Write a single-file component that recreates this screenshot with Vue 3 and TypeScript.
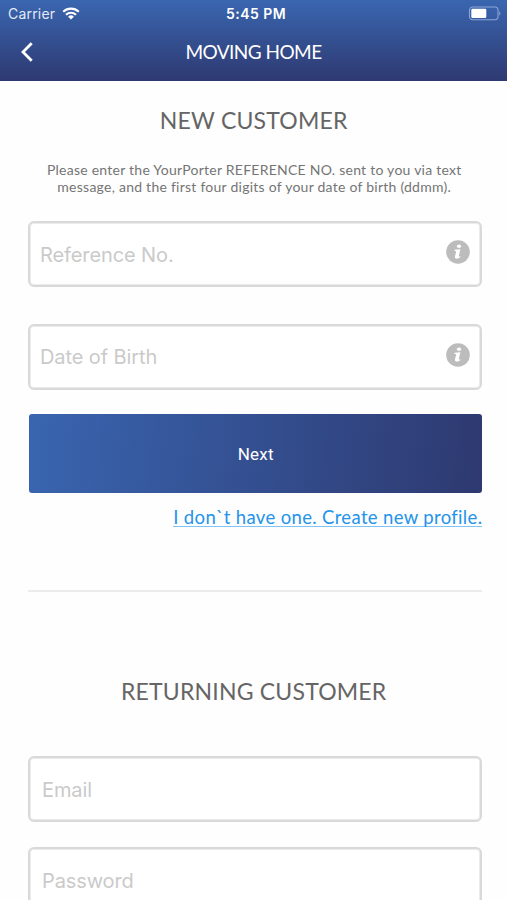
<script setup lang="ts">
import { reactive } from 'vue'

interface Field {
  key: 'reference' | 'birth' | 'email' | 'password'
  label: string
  type: string
}

const customerFields: Field[] = [
  { key: 'reference', label: 'Reference No.', type: 'text' },
  { key: 'birth', label: 'Date of Birth', type: 'text' },
]
const loginFields: Field[] = [
  { key: 'email', label: 'Email', type: 'email' },
  { key: 'password', label: 'Password', type: 'password' },
]
const form = reactive({ reference: '', birth: '', email: '', password: '' })
</script>

<template>
  <div class="screen">
    <header class="header">
      <div class="status">
        <div class="carrier">
          <span class="carrier-name">Carrier</span>
          <svg class="wifi" viewBox="0 0 18 13" width="18" height="13">
            <path d="M1.2 4.8a11.2 11.2 0 0 1 15.6 0M4 7.7a7.2 7.2 0 0 1 10 0" fill="none" stroke="#fff" stroke-width="2.1" />
            <path d="M9 12.6 6.1 9.7a4.1 4.1 0 0 1 5.8 0z" fill="#fff" />
          </svg>
        </div>
        <span class="time">5:45 PM</span>
        <svg class="battery" viewBox="0 0 33 15" width="33" height="15">
          <rect x="1.5" y="1" width="28.5" height="12.7" rx="3.2" fill="none" stroke="#8ba6d6" stroke-width="1.1" />
          <rect x="3.3" y="2.8" width="15" height="9.1" rx="1.2" fill="#fff" />
          <path d="M31.3 5.2c1.5.6 1.5 3.7 0 4.3z" fill="#8ba6d6" />
        </svg>
      </div>
      <nav class="nav">
        <button class="back" aria-label="Back">
          <svg viewBox="0 0 14 22" width="14" height="22">
            <path d="M11.7 2.2 3 11l8.7 8.8" fill="none" stroke="#fff" stroke-width="2.8" />
          </svg>
        </button>
        <h1 class="title">MOVING HOME</h1>
      </nav>
    </header>

    <main class="content">
      <h2 class="heading new">NEW CUSTOMER</h2>
      <p class="intro">
        <span class="line first">Please enter the YourPorter REFERENCE NO. sent to you via text</span>
        <span class="line second">message, and the first four digits of your date of birth (ddmm).</span>
      </p>
      <div class="fields customer">
        <label v-for="f in customerFields" :key="f.key" class="field">
          <input v-model="form[f.key]" :type="f.type" :placeholder="f.label" />
          <svg class="info" viewBox="0 0 24 24" width="24" height="24">
            <circle cx="12" cy="12" r="11.8" fill="#bcbcbc" />
            <ellipse cx="13" cy="6.2" rx="2.1" ry="1.8" fill="#fff" />
            <path d="M8.6 9.7 14.4 9.2 12.8 16c-.1.7.4.8 1.7.2l-.2 1c-1.4 1.1-2.8 1.6-4 1.4-1.2-.2-1.6-1.1-1.3-2.3l1.1-4.5c.1-.6-.4-.8-1.7-.9z" fill="#fff" />
          </svg>
        </label>
      </div>
      <button class="next"><span>Next</span></button>
      <a class="create">I don`t have one. Create new profile.</a>
      <hr class="divider" />
      <h2 class="heading returning">RETURNING CUSTOMER</h2>
      <div class="fields login">
        <label v-for="f in loginFields" :key="f.key" class="field">
          <input v-model="form[f.key]" :type="f.type" :placeholder="f.label" />
        </label>
      </div>
    </main>
  </div>
</template>

<style>
body {
  margin: 0;
  overflow: hidden;
}
</style>

<style scoped>
.screen {
  box-sizing: border-box;
  width: 100%;
  height: 900px;
  overflow: hidden;
  background: #fefefe;
  font-family: Lato, "Liberation Sans", sans-serif;
}
button {
  border: 0;
  padding: 0;
  background: none;
  font: inherit;
}
.header {
  box-sizing: border-box;
  height: 81px;
  background: linear-gradient(#3a66b0, #2e3971);
  color: #fff;
}
.status {
  display: grid;
  grid-template-columns: 1fr auto 1fr;
  align-items: center;
  height: 27px;
  padding: 0 6px 0 8px;
  font-family: Inter, sans-serif;
  font-size: 14px;
}
.carrier {
  display: flex;
  align-items: center;
  gap: 7px;
}
.carrier-name {
  letter-spacing: 0.2px;
  color: #e3eaf6;
}
.time {
  font-weight: 600;
  font-size: 14px;
  letter-spacing: 0.45px;
  padding-left: 3px;
}
.battery {
  justify-self: end;
}
.nav {
  display: grid;
  grid-template-columns: 60px 1fr 60px;
  align-items: center;
  height: 49px;
}
.back {
  display: flex;
  padding-left: 20px;
}
.title {
  margin: 0;
  text-align: center;
  font-size: 19px;
  font-weight: 400;
  letter-spacing: -0.55px;
  white-space: nowrap;
}
.content {
  display: flex;
  flex-direction: column;
  padding: 0 24.6px 0 28px;
}
.heading {
  margin: 0;
  padding-right: 3px;
  text-align: center;
  font-size: 23px;
  line-height: 28px;
  font-weight: 400;
  letter-spacing: 0.2px;
  color: #656565;
}
.new {
  margin-top: 25px;
}
.intro {
  margin: 27px 0 0;
  padding-right: 2px;
  font-size: 14px;
  line-height: 17px;
  letter-spacing: 0.25px;
  color: #757575;
  text-align: center;
}
.line {
  display: block;
  white-space: nowrap;
}
.fields {
  display: flex;
  flex-direction: column;
}
.customer {
  margin-top: 26px;
  gap: 36.5px;
}
.field {
  box-sizing: border-box;
  display: flex;
  align-items: center;
  height: 66px;
  border: 2px solid #d8d9db;
  border-radius: 6px;
  padding: 0 10px;
  background: #fff;
  box-shadow: inset 0 0 0 1px #ebebec;
}
input {
  flex: 1;
  min-width: 0;
  border: 0;
  outline: 0;
  padding: 1px 0 0;
  background: none;
  font: 400 20px Inter, sans-serif;
  letter-spacing: -0.1px;
}
input::placeholder {
  color: #cacaca;
  opacity: 1;
}
.info {
  margin-bottom: 4px;
}
.next {
  height: 79px;
  margin: 24.5px 0 0 1px;
  border-radius: 3px;
  background: linear-gradient(97deg, #3965b0, #2e3970);
  color: #fff;
  font-family: Roboto, sans-serif;
  font-size: 17px;
  font-weight: 400;
  letter-spacing: 0.2px;
}
.create {
  align-self: flex-end;
  margin-top: 16px;
  border-bottom: 1px solid #80c4f6;
  font-size: 18.5px;
  line-height: 16px;
  padding-bottom: 1px;
  letter-spacing: 0.34px;
  color: #2493ea;
  white-space: nowrap;
}
.divider {
  width: 100%;
  height: 2px;
  margin: 63px 0 0;
  border: 0;
  background: #ececec;
}
.returning {
  margin-top: 85px;
}
.login {
  margin-top: 51px;
  gap: 25px;
}
.login .field {
  padding-left: 12px;
}
</style>
